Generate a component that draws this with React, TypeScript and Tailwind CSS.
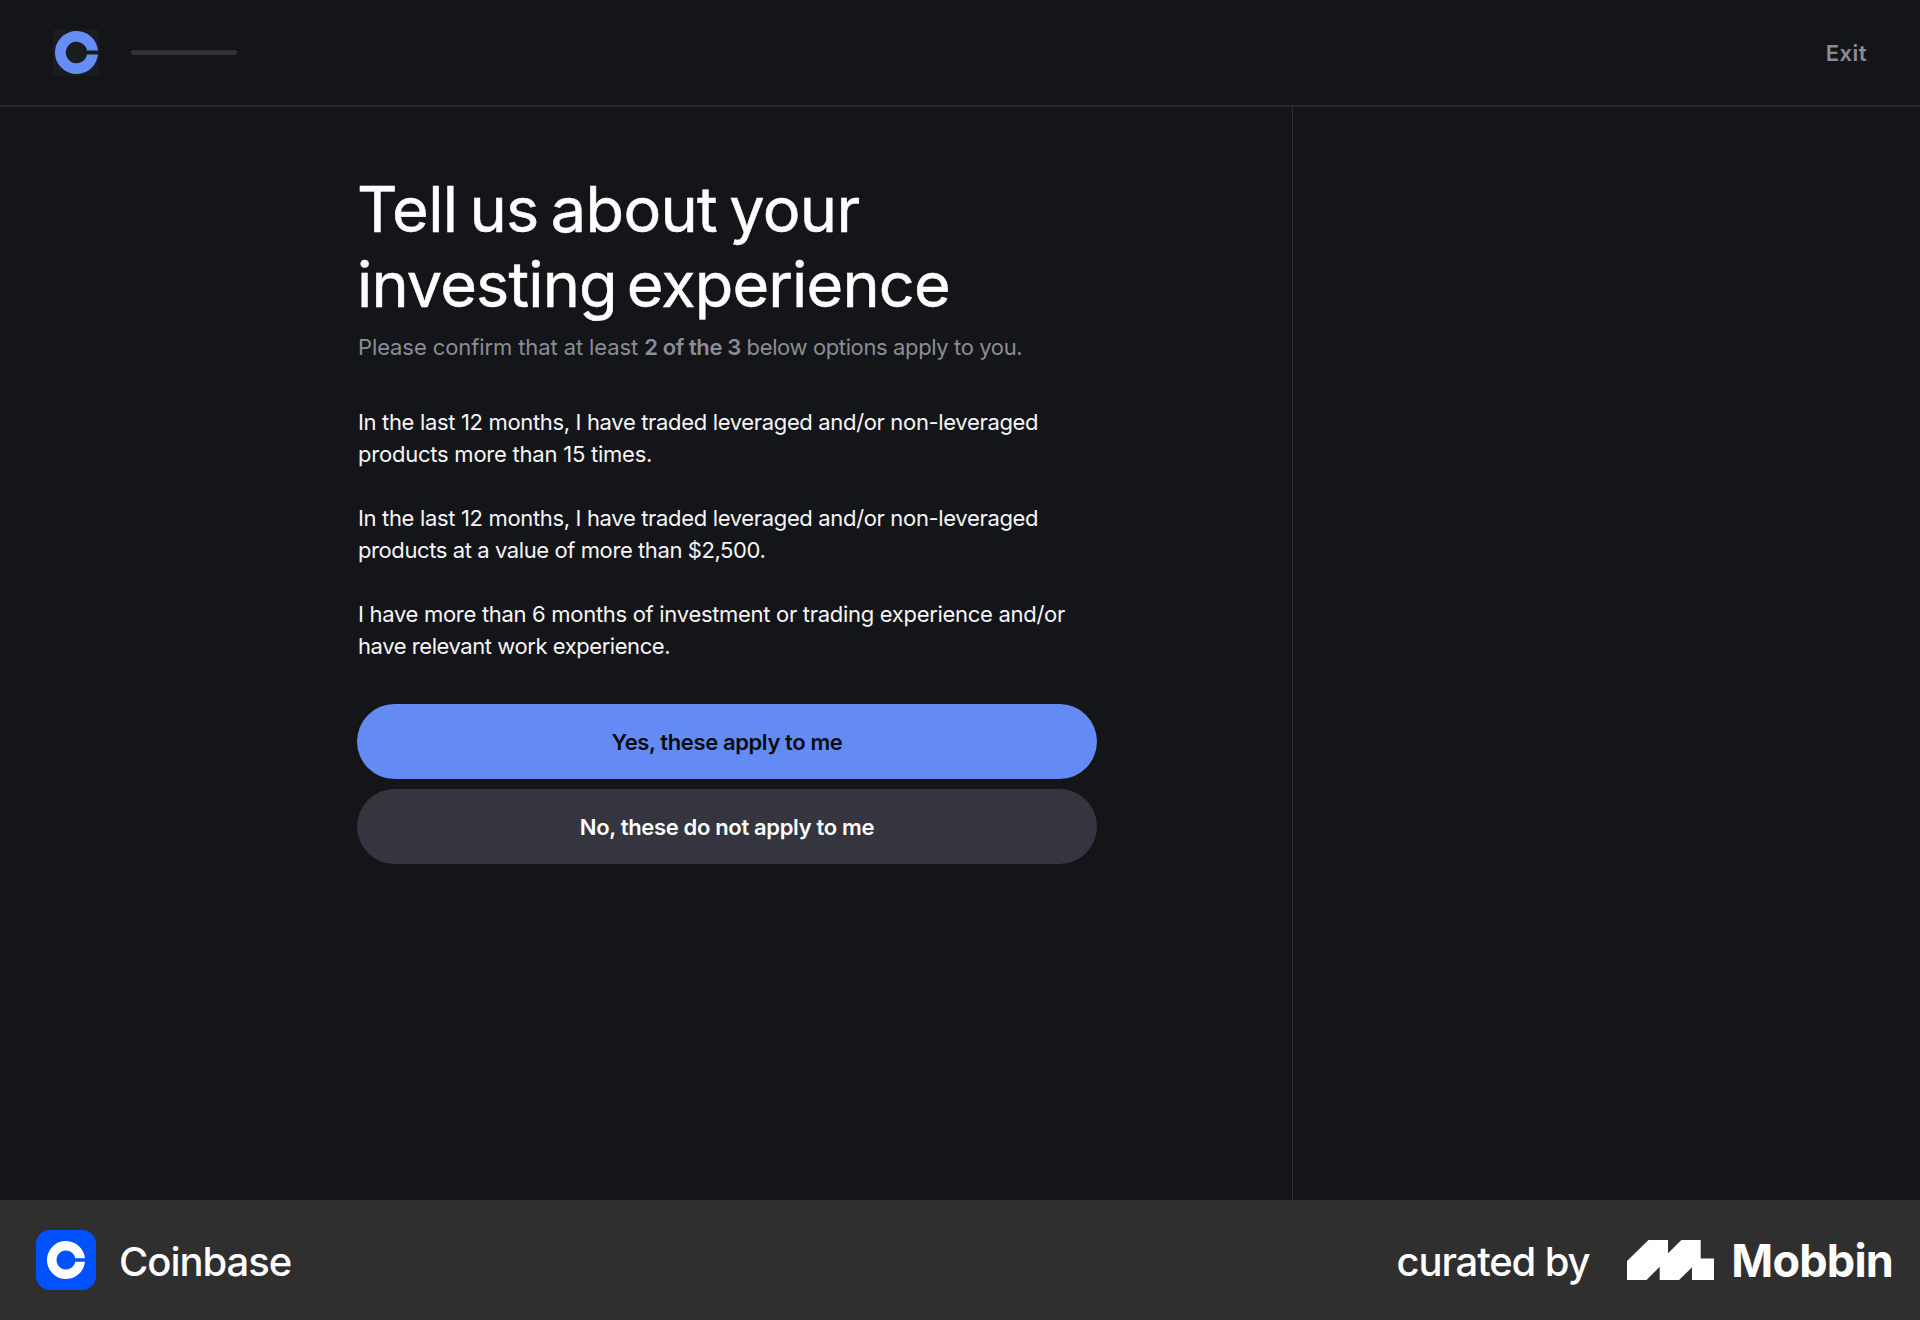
function CoinbaseMark({ size, className }: { size: number; className: string }) {
  return (
    <svg width={size} height={size} viewBox="0 0 43 43" className={className} fill="currentColor">
      <path d="M42.9 19.5A21.5 21.5 0 1 0 42.9 23.5H32A10.7 10.7 0 1 1 32 19.5Z" />
    </svg>
  );
}

const paragraphs = [
  [
    { text: "In the last 12 months, I have traded leveraged and/or non-leveraged", tracking: "tracking-[-0.34px]" },
    { text: "products more than 15 times.", tracking: "tracking-[-0.23px]" },
  ],
  [
    { text: "In the last 12 months, I have traded leveraged and/or non-leveraged", tracking: "tracking-[-0.34px]" },
    { text: "products at a value of more than $2,500.", tracking: "tracking-[-0.41px]" },
  ],
  [
    { text: "I have more than 6 months of investment or trading experience and/or", tracking: "tracking-[-0.3px]" },
    { text: "have relevant work experience.", tracking: "tracking-[-0.44px]" },
  ],
];

export default function App() {
  return (
    <div className="flex h-[1320px] w-[1920px] flex-col overflow-hidden bg-[#141519] font-[Inter,sans-serif] text-white">
      <header className="flex h-[107px] shrink-0 items-center justify-between border-b-2 border-[#26272b] pl-[53px] pr-[53px]">
        <div className="flex items-center">
          <div className="flex size-[46px] items-center justify-center bg-[#1a1d20]">
            <CoinbaseMark size={43} className="text-[#668df5]" />
          </div>
          <div className="ml-8 h-[5px] w-[106px] rounded-full bg-[#303136]" />
        </div>
        <button className="pt-0.5 text-[22px] font-semibold tracking-[0.5px] text-[#8a8d96]">Exit</button>
      </header>
      <div className="flex grow">
        <main className="w-[1293px] border-r border-[#303136] pl-[357px] pt-[65px]">
          <h1 className="whitespace-nowrap text-[63px] leading-[75px] [-webkit-text-stroke:0.5px_white]">
            <span className="block tracking-[-0.65px] [word-spacing:-5px]">Tell us about your</span>
            <span className="block tracking-[-0.85px] [word-spacing:-7px]">investing experience</span>
          </h1>
          <p className="mt-[9px] whitespace-nowrap pl-px text-[22px] leading-8 tracking-[-0.38px] text-[#8a8d96]">
            <span className="tracking-[-0.1px]">Please confirm that at least </span>
            <b className="font-semibold tracking-[-0.4px]">2 of the 3</b> below options apply to you.
          </p>
          <div className="mt-[42px] flex flex-col gap-8 whitespace-nowrap pl-px pt-px text-[22px] leading-8 text-[#f6f6f7]">
            {paragraphs.map((lines, i) => (
              <p key={i}>
                {lines.map((line) => (
                  <span key={line.text} className={`block ${line.tracking}`}>{line.text}</span>
                ))}
              </p>
            ))}
          </div>
          <div className="mt-[42px] flex w-[740px] flex-col gap-2.5 text-[22px] font-semibold">
            <button className="h-[75px] rounded-full bg-[#648bf4] pt-px tracking-[-0.39px] text-[#0a0b0d]">Yes, these apply to me</button>
            <button className="h-[75px] rounded-full bg-[#34353e] pt-px tracking-[-0.34px]">No, these do not apply to me</button>
          </div>
        </main>
      </div>
      <footer className="flex h-[120px] shrink-0 items-center justify-between bg-[#2f2f2f] pl-9 pr-[27px]">
        <div className="flex items-center">
          <div className="flex size-[60px] items-center justify-center rounded-[14px] bg-[#0052ff]">
            <CoinbaseMark size={38} className="text-white" />
          </div>
          <span className="ml-[23px] pt-[3px] text-[40px] font-medium tracking-[-1.05px]">Coinbase</span>
        </div>
        <div className="flex items-center">
          <span className="pt-[3px] text-[40px] font-medium tracking-[-1.15px]">curated by</span>
          <svg width="87" height="40" viewBox="0 0 87 40" className="ml-[38px]" fill="currentColor">
            <path d="M0 21L21.5 0H41V13.3L54.4 0H73.7V18.6H87V40H65V27.3L52 40H32.7V26.8L19.5 40H0Z" />
          </svg>
          <span className="ml-[17px] pt-0.5 text-[45px] font-bold tracking-[-0.8px]">Mobbin</span>
        </div>
      </footer>
    </div>
  );
}
